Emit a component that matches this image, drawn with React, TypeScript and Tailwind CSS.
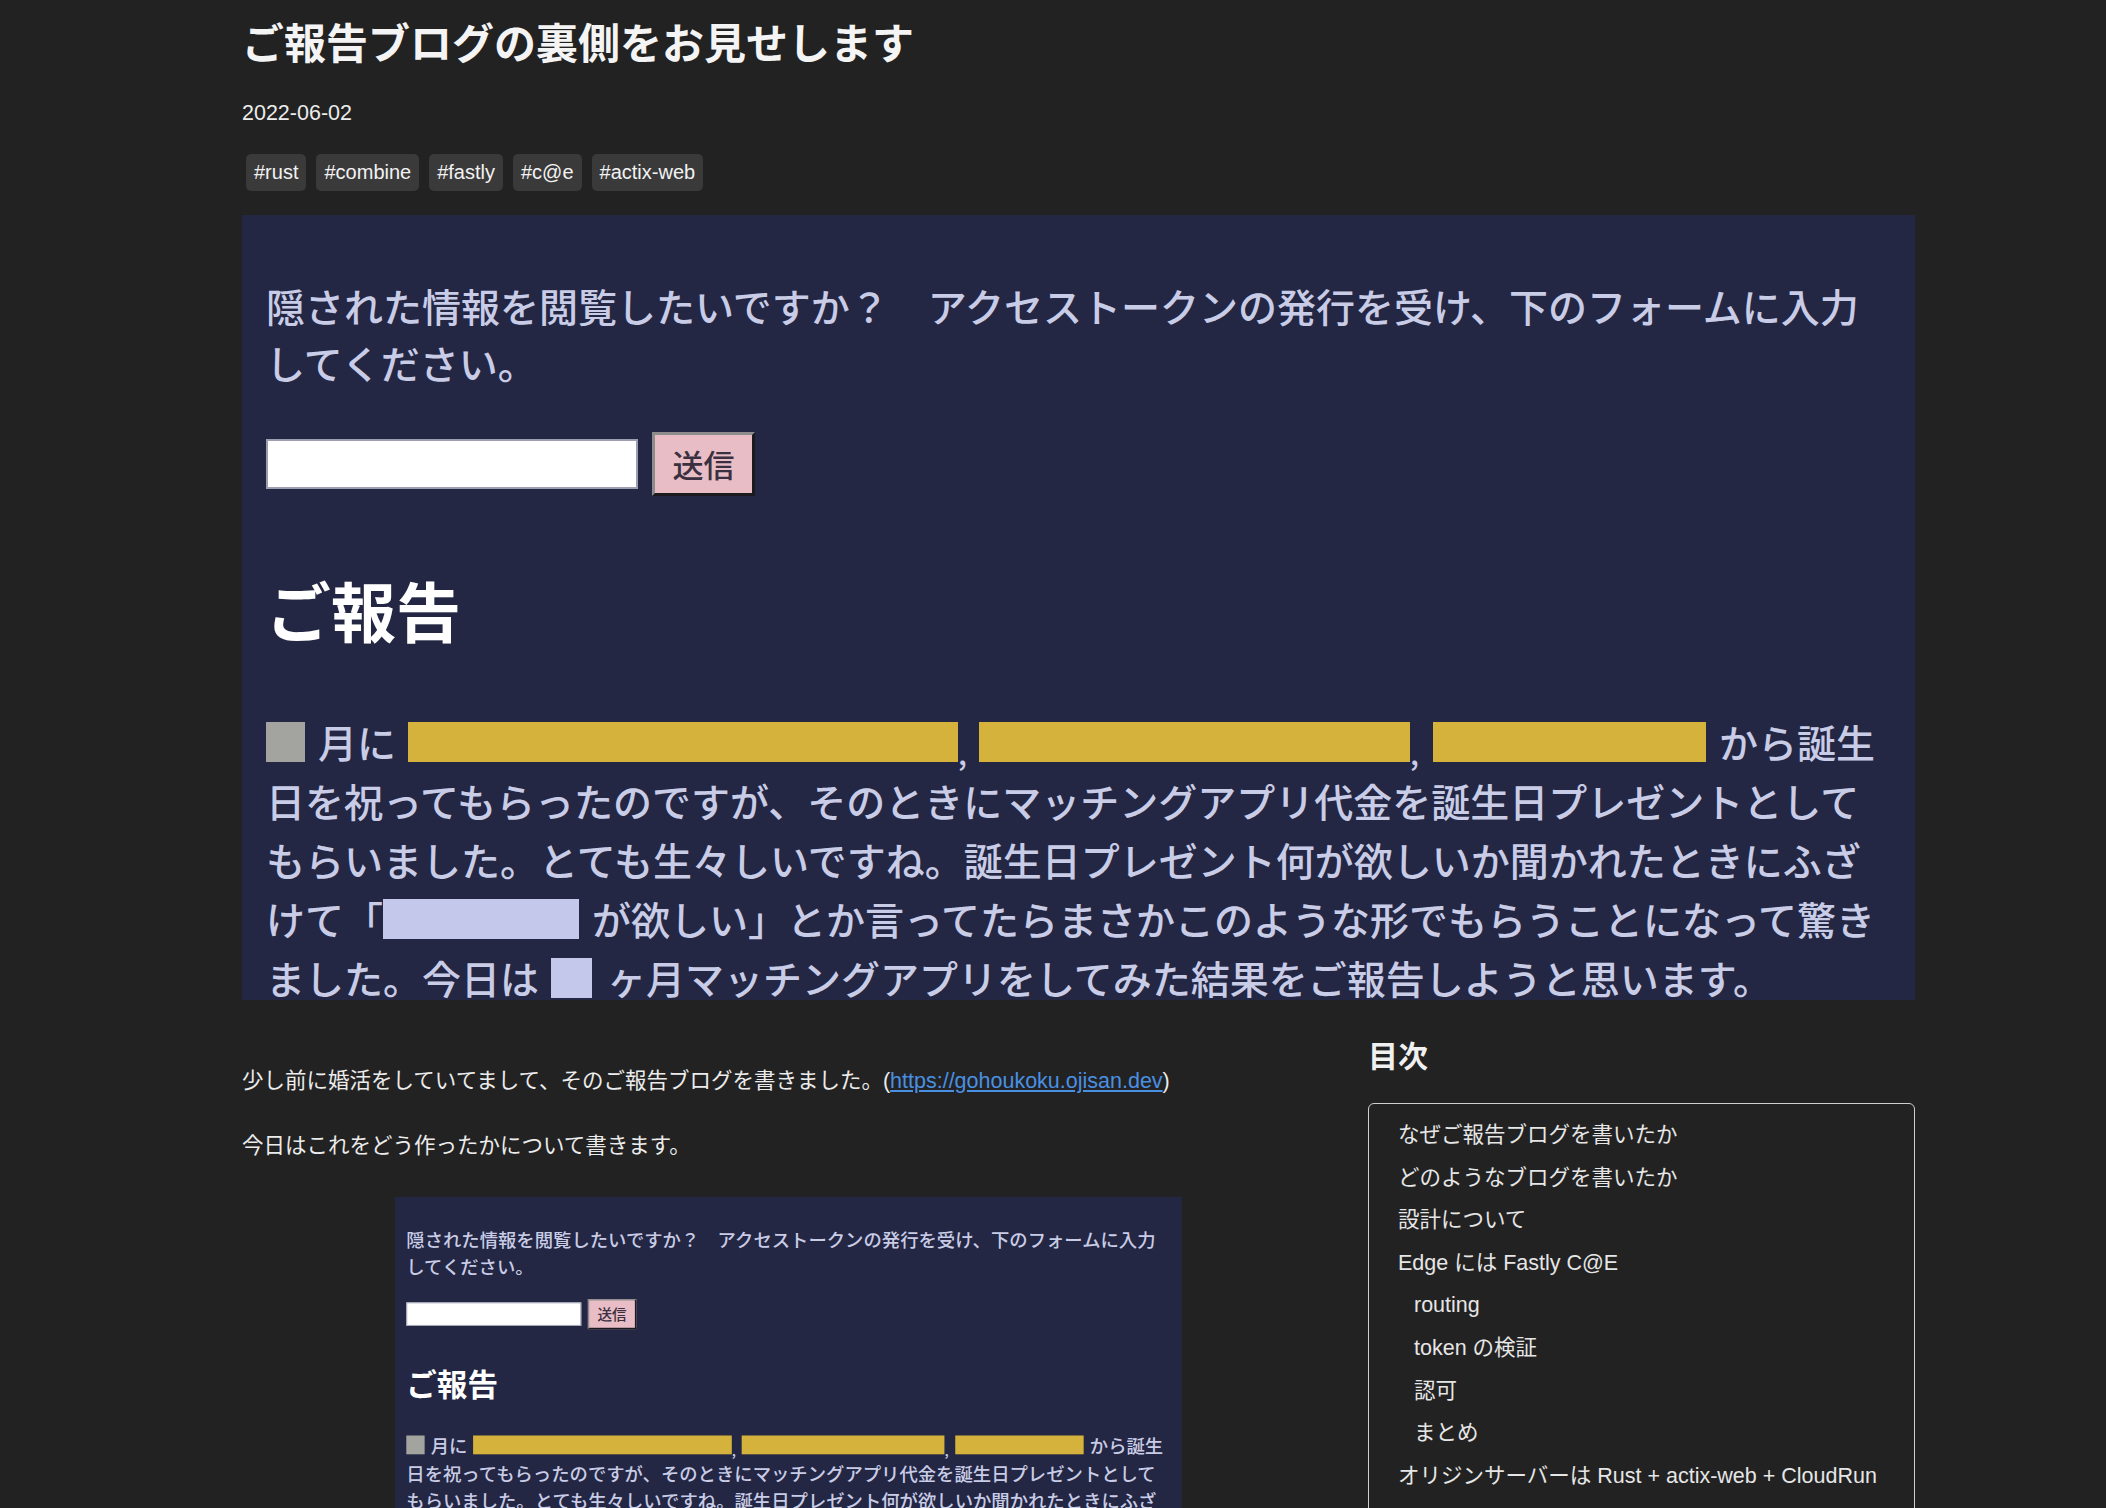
const tags = ["#rust", "#combine", "#fastly", "#c@e", "#actix-web"];

const toc: { label: string; sub?: boolean }[] = [
  { label: "なぜご報告ブログを書いたか" },
  { label: "どのようなブログを書いたか" },
  { label: "設計について" },
  { label: "Edge には Fastly C@E" },
  { label: "routing", sub: true },
  { label: "token の検証", sub: true },
  { label: "認可", sub: true },
  { label: "まとめ", sub: true },
  { label: "オリジンサーバーは Rust + actix-web + CloudRun" },
];

// the screenshot of gohoukoku.ojisan.dev embedded in the post
function Capture({ className = "" }: { className?: string }) {
  return (
    <div
      className={`w-[1673px] h-[785px] overflow-hidden bg-[#232743] pl-[24px] pt-[62px] text-[#c9cce6] font-medium font-['Noto_Sans_CJK_JP',sans-serif] whitespace-nowrap ${className}`}
    >
      <p className="text-[39px] leading-[57px]">
        隠された情報を閲覧したいですか？　アクセストークンの発行を受け、下のフォームに入力
        <br />
        してください。
      </p>
      <div className="mt-[41px] flex items-center">
        <div className="w-[372px] h-[50px] bg-white border-2 border-[#9d9fb0]" />
        <div className="ml-[14px] w-[103px] h-[64px] bg-[#e9bdc5] border-[3px] border-t-[#8d8d8d] border-l-[#8d8d8d] border-b-[#1b1b1f] border-r-[#1b1b1f] flex items-center justify-center text-[31px] text-[#3a3040]">
          送信
        </div>
      </div>
      <h2 className="mt-[74px] text-[65px] leading-[78px] font-bold text-white">ご報告</h2>
      <div className="mt-[64px] text-[39px]">
        <div className="flex items-center h-[59px]">
          <span className="w-[39px] h-[40px] bg-[#a3a39f]" />
          <span className="ml-[13px]">月に</span>
          <span className="ml-[12px] w-[550px] h-[40px] bg-[#d5b23b]" />
          <span className="w-[21px] self-end pb-[4px] text-[30px] leading-[30px]">,</span>
          <span className="w-[431px] h-[40px] bg-[#d5b23b]" />
          <span className="w-[23px] self-end pb-[4px] text-[30px] leading-[30px]">,</span>
          <span className="w-[273px] h-[40px] bg-[#d5b23b]" />
          <span className="ml-[13px]">から誕生</span>
        </div>
        <div className="flex items-center h-[59px]">
          日を祝ってもらったのですが、そのときにマッチングアプリ代金を誕生日プレゼントとして
        </div>
        <div className="flex items-center h-[59px]">
          もらいました。とても生々しいですね。誕生日プレゼント何が欲しいか聞かれたときにふざ
        </div>
        <div className="flex items-center h-[59px]">
          <span>けて「</span>
          <span className="w-[196px] h-[40px] bg-[#c4c9ec]" />
          <span className="ml-[13px]">が欲しい」とか言ってたらまさかこのような形でもらうことになって驚き</span>
        </div>
        <div className="flex items-center h-[59px]">
          <span>ました。今日は</span>
          <span className="ml-[12px] w-[41px] h-[40px] bg-[#c4c9ec]" />
          <span className="ml-[15px]">ヶ月マッチングアプリをしてみた結果をご報告しようと思います。</span>
        </div>
      </div>
    </div>
  );
}

export default function App() {
  return (
    <div className="h-[1508px] overflow-hidden bg-[#222222] text-[#ececec] font-['Liberation_Sans','Noto_Sans_CJK_JP',sans-serif]">
      <div className="ml-[242px] w-[1673px] pt-[20px]">
        <h1 className="text-[42px] leading-[50px] font-bold text-[#f4f4f4]">ご報告ブログの裏側をお見せします</h1>
        <div className="mt-[27px] text-[21.5px] leading-[32px]">2022-06-02</div>
        <div className="mt-[25px] ml-[4px] flex gap-[10px]">
          {tags.map((t) => (
            <span key={t} className="h-[37px] px-[8px] rounded-[5px] bg-[#3a3a3a] text-[20px] leading-[37px] text-[#f2f2f2]">
              {t}
            </span>
          ))}
        </div>
        <div className="mt-[24px]">
          <Capture />
        </div>

        <div className="grid grid-cols-[1093px_547px] gap-x-[33px] items-start">
          <div className="text-[21.5px] leading-[32px]">
            <p className="mt-[65px]">
              少し前に婚活をしていてまして、そのご報告ブログを書きました。(
              <a href="#" className="text-[#4a90e2] underline">
                https://gohoukoku.ojisan.dev
              </a>
              )
            </p>
            <p className="mt-[33px]">今日はこれをどう作ったかについて書きます。</p>
            <div className="mx-auto mt-[35px] w-[787px] h-[369px] overflow-hidden">
              <Capture className="origin-top-left scale-[0.4704]" />
            </div>
          </div>

          <div>
            <h2 className="mt-[39px] text-[30px] leading-[36px] font-bold text-[#f0f0f0]">目次</h2>
            <div className="mt-[28px] h-[600px] border border-[#cfcfcf] rounded-[6px] pt-[10px] pl-[29px]">
              <ul className="text-[21.5px] leading-[42.6px] text-[#e6e6e6]">
                {toc.map((item) => (
                  <li key={item.label} className={item.sub ? "pl-[16px]" : ""}>
                    {item.label}
                  </li>
                ))}
              </ul>
            </div>
          </div>
        </div>
      </div>
    </div>
  );
}
